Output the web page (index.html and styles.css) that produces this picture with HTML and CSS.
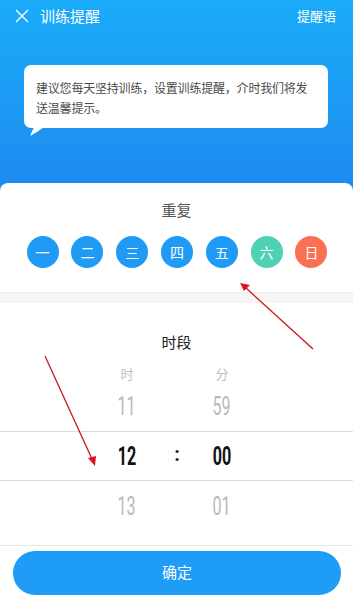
FILE: index.html
```
<!DOCTYPE html>
<html lang="zh">
<head>
<meta charset="utf-8">
<title>训练提醒</title>
<link rel="stylesheet" href="styles.css">
</head>
<body>
<div class="page">
  <div class="top">
    <div class="bar">
      <svg class="close" width="14" height="14" viewBox="0 0 14 14"><path d="M1 1L13 13M13 1L1 13" stroke="#fff" stroke-width="1.4" fill="none"/></svg>
      <span class="title">训练提醒</span>
      <span class="bar-right">提醒语</span>
    </div>
    <div class="bubble">
      <p class="bubble-text">建议您每天坚持训练，设置训练提醒，介时我们将发送温馨提示。</p>
      <svg class="tail" width="14" height="9" viewBox="0 0 14 9"><path d="M4 0L14 0L7 5L0 9Z" fill="#fff"/></svg>
    </div>
  </div>
  <div class="card">
    <div class="repeat">
      <div class="sec-title">重复</div>
      <div class="days">
        <span class="day blue">一</span>
        <span class="day blue">二</span>
        <span class="day blue">三</span>
        <span class="day blue">四</span>
        <span class="day blue">五</span>
        <span class="day teal">六</span>
        <span class="day orange">日</span>
      </div>
    </div>
    <div class="sep"></div>
    <div class="picker">
      <div class="sec-title dark">时段</div>
      <div class="grid labels">
        <span class="cell h">时</span>
        <span class="cell c"></span>
        <span class="cell m">分</span>
      </div>
      <div class="grid row">
        <span class="cell h"><span class="num">11</span></span>
        <span class="cell c"></span>
        <span class="cell m"><span class="num">59</span></span>
      </div>
      <div class="grid row current">
        <span class="cell h"><span class="num">12</span></span>
        <span class="cell c"><span class="colon">:</span></span>
        <span class="cell m"><span class="num">00</span></span>
      </div>
      <div class="grid row">
        <span class="cell h"><span class="num">13</span></span>
        <span class="cell c"></span>
        <span class="cell m"><span class="num">01</span></span>
      </div>
    </div>
    <div class="footer">
      <button class="ok">确定</button>
    </div>
  </div>
  <svg class="arrows" width="353" height="600" viewBox="0 0 353 600">
    <line x1="313" y1="349" x2="246" y2="288" stroke="#c8161d" stroke-width="1.3"/>
    <path d="M240 283L250 285L244 291Z" fill="#d9141c"/>
    <line x1="45" y1="356" x2="92" y2="459" stroke="#c8161d" stroke-width="1.3"/>
    <path d="M95 466L88 458L96 456Z" fill="#d9141c"/>
  </svg>
</div>
</body>
</html>
```
FILE: styles.css
```
html, body {
  margin: 0;
  padding: 0;
}
body {
  font-family: "Noto Sans CJK SC", "Noto Sans", sans-serif;
  background: #fff;
}
.page {
  position: relative;
  width: 353px;
  height: 600px;
  overflow: hidden;
  display: flex;
  flex-direction: column;
}
.top {
  height: 193px;
  flex: none;
  background: linear-gradient(180deg, #1aabf9 0%, #1d98f3 60%, #1e89ef 100%);
  display: flex;
  flex-direction: column;
}
.bar {
  height: 32px;
  display: flex;
  align-items: center;
  padding: 0 17px 0 15px;
  color: #fff;
}
.close {
  flex: none;
}
.title {
  margin-left: 11px;
  font-size: 15px;
  line-height: 32px;
}
.bar-right {
  margin-left: auto;
  font-size: 13px;
  line-height: 32px;
}
.bubble {
  position: relative;
  margin: 33px 25px 0 24px;
  height: 63px;
  box-sizing: border-box;
  background: #fff;
  border-radius: 7px;
  padding: 13px 12px 0 12px;
}
.bubble-text {
  margin: 0;
  font-size: 12px;
  line-height: 20px;
  color: #4a4a4a;
  letter-spacing: -0.2px;
}
.tail {
  position: absolute;
  left: 6px;
  top: 62px;
}
.card {
  flex: 1;
  margin-top: -10px;
  background: #fff;
  border-radius: 8px 8px 0 0;
  display: flex;
  flex-direction: column;
}
.repeat {
  height: 109px;
  padding-top: 17px;
  box-sizing: border-box;
}
.sec-title {
  text-align: center;
  font-size: 15px;
  line-height: 20px;
  color: #555;
}
.sec-title.dark {
  color: #222;
}
.days {
  margin-top: 16px;
  display: flex;
  justify-content: center;
  gap: 12.8px;
  padding-left: 1px;
}
.day {
  width: 32px;
  height: 32px;
  border-radius: 50%;
  color: #fff;
  font-size: 14px;
  display: flex;
  align-items: center;
  justify-content: center;
}
.blue { background: #1f9bf5; }
.teal { background: #4fd1b6; }
.orange { background: #f97152; }
.sep {
  height: 10px;
  background: #f5f5f5;
  border-top: 1px solid #ececec;
  flex: none;
}
.picker {
  padding-top: 29px;
}
.grid {
  display: grid;
  grid-template-columns: 80px 94px 6px 84px 1fr;
}
.cell {
  display: flex;
  align-items: center;
  justify-content: center;
}
.cell.h { grid-column: 2; }
.cell.c { grid-column: 3; }
.cell.m { grid-column: 4; }
.labels {
  margin-top: 11px;
  height: 20px;
  font-size: 13px;
  color: #bdbdbd;
}
.row {
  height: 49px;
}
.labels + .row {
  height: 50px;
  margin-top: -2px;
}
.num {
  display: inline-block;
  font-family: Roboto, "Noto Sans", sans-serif;
  font-size: 26px;
  line-height: 30px;
  color: #b9b9b9;
  transform: scaleX(0.62);
}
.current {
  height: 48px;
  border-top: 1px solid #dcdcdc;
  border-bottom: 1px solid #dcdcdc;
}
.current .num {
  color: #111;
  font-weight: 700;
}
.colon {
  font-family: Roboto, sans-serif;
  font-weight: 700;
  font-size: 20px;
  color: #222;
  line-height: 24px;
  margin-top: -4px;
}
.footer {
  margin-top: auto;
  height: 55px;
  border-top: 1px solid #e4e4e4;
  box-sizing: border-box;
  padding: 5px 12px 0 13px;
}
.ok {
  display: block;
  width: 100%;
  height: 44px;
  border: none;
  border-radius: 22px;
  background: #1f9cf5;
  color: #fff;
  font-family: "Noto Sans CJK SC", sans-serif;
  font-size: 15px;
  line-height: 20px;
  padding: 0 0 3px 0;
}
.arrows {
  position: absolute;
  left: 0;
  top: 0;
  pointer-events: none;
}
```
